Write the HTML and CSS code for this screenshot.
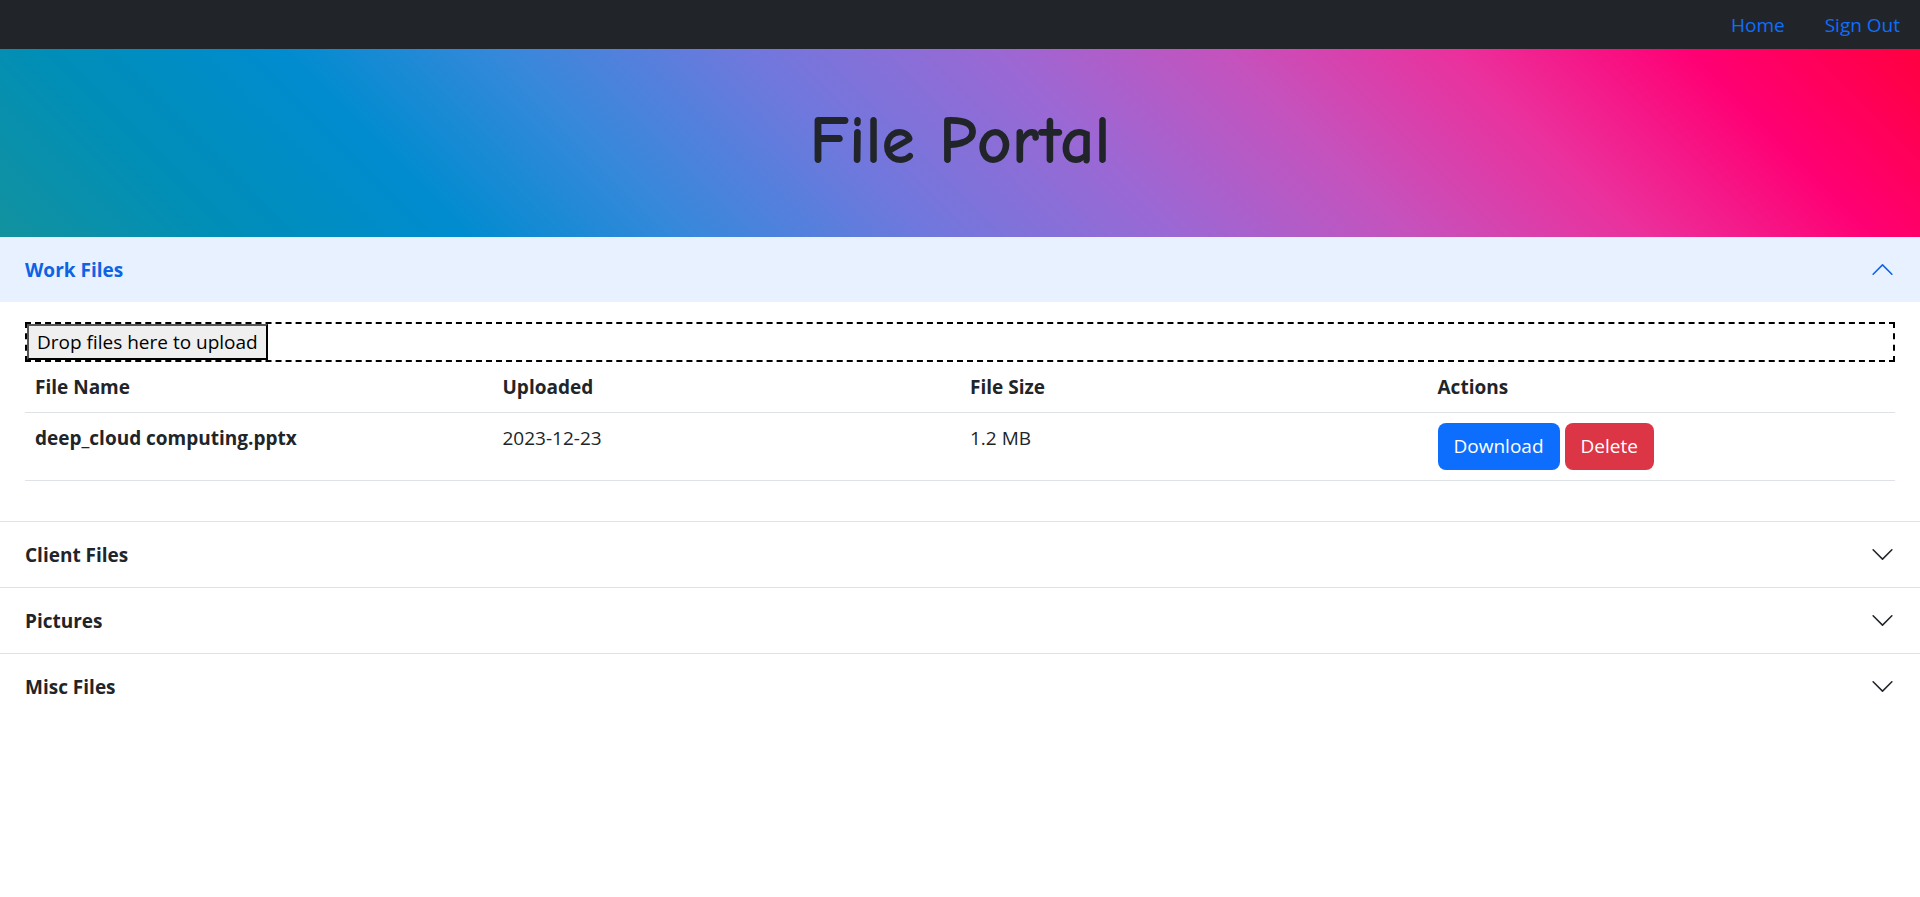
FILE: index.html
```html
<!DOCTYPE html>
<html lang="en">
<head>
<meta charset="utf-8">
<title>File Portal</title>
<link rel="stylesheet" href="styles.css">
</head>
<body>
<nav class="navbar">
  <a class="nav-link" href="#home">Home</a>
  <a class="nav-link" href="#signout">Sign Out</a>
</nav>
<header class="banner">
  <h1 class="banner-title">File Portal</h1>
</header>
<main class="accordion">
  <section class="item">
    <h2 class="item-heading">
      <button class="toggle toggle-open" type="button" aria-expanded="true" aria-controls="work-files">Work Files
        <svg class="chevron" viewBox="0 0 16 16" aria-hidden="true"><path fill-rule="evenodd" d="M1.646 4.646a.5.5 0 0 1 .708 0L8 10.293l5.646-5.647a.5.5 0 0 1 .708.708l-6 6a.5.5 0 0 1-.708 0l-6-6a.5.5 0 0 1 0-.708z"/></svg>
      </button>
    </h2>
    <div class="item-body" id="work-files">
      <div class="dropzone">
        <button class="drop-button" type="button">Drop files here to upload</button>
      </div>
      <table class="files">
        <thead>
          <tr><th scope="col">File Name</th><th scope="col">Uploaded</th><th scope="col">File Size</th><th scope="col">Actions</th></tr>
        </thead>
        <tbody>
          <tr>
            <th scope="row">deep_cloud computing.pptx</th>
            <td>2023-12-23</td>
            <td>1.2 MB</td>
            <td>
              <div class="actions">
                <button class="btn btn-primary" type="button">Download</button>
                <button class="btn btn-danger" type="button">Delete</button>
              </div>
            </td>
          </tr>
        </tbody>
      </table>
    </div>
  </section>
  <section class="item">
    <h2 class="item-heading">
      <button class="toggle" type="button" aria-expanded="false">Client Files
        <svg class="chevron" viewBox="0 0 16 16" aria-hidden="true"><path fill-rule="evenodd" d="M1.646 4.646a.5.5 0 0 1 .708 0L8 10.293l5.646-5.647a.5.5 0 0 1 .708.708l-6 6a.5.5 0 0 1-.708 0l-6-6a.5.5 0 0 1 0-.708z"/></svg>
      </button>
    </h2>
  </section>
  <section class="item">
    <h2 class="item-heading">
      <button class="toggle" type="button" aria-expanded="false">Pictures
        <svg class="chevron" viewBox="0 0 16 16" aria-hidden="true"><path fill-rule="evenodd" d="M1.646 4.646a.5.5 0 0 1 .708 0L8 10.293l5.646-5.647a.5.5 0 0 1 .708.708l-6 6a.5.5 0 0 1-.708 0l-6-6a.5.5 0 0 1 0-.708z"/></svg>
      </button>
    </h2>
  </section>
  <section class="item">
    <h2 class="item-heading">
      <button class="toggle" type="button" aria-expanded="false">Misc Files
        <svg class="chevron" viewBox="0 0 16 16" aria-hidden="true"><path fill-rule="evenodd" d="M1.646 4.646a.5.5 0 0 1 .708 0L8 10.293l5.646-5.647a.5.5 0 0 1 .708.708l-6 6a.5.5 0 0 1-.708 0l-6-6a.5.5 0 0 1 0-.708z"/></svg>
      </button>
    </h2>
  </section>
</main>
</body>
</html>
```
FILE: styles.css
```css
*, *::before, *::after { box-sizing: border-box; }

body {
  margin: 0;
  background: #fff;
  color: #212529;
  font-family: "Segoe UI", "Open Sans", "Noto Sans", sans-serif;
  font-size: 19px;
  line-height: 30px;
}

button { font: inherit; cursor: pointer; }

.navbar {
  display: flex;
  justify-content: flex-end;
  gap: 40px;
  padding: 10px 20px 9px;
  background: #212529;
}

.nav-link { color: #0d6efd; text-decoration: none; }

.banner {
  padding: 48px 20px 52px;
  text-align: center;
  background: linear-gradient(45deg, #12929f 0%, #008eb8 11%, #008ccf 22%, #3888db 33%, #6f78dd 44%, #9b68d4 56%, #c552bd 67%, #eb309c 78%, #ff0074 89%, #ff0040 100%);
}

.banner-title {
  margin: 0;
  font-family: "Comic Sans MS", "Comic Neue", "Open Sans", sans-serif;
  font-size: 68px;
  font-weight: 700;
  line-height: 88px;
}

.item + .item { border-top: 1px solid #dee2e6; }

.item-heading { margin: 0; font-size: 19px; }

.toggle {
  display: flex;
  align-items: center;
  justify-content: space-between;
  width: 100%;
  min-height: 65px;
  padding: 16px 25px;
  border: 0;
  background: #fff;
  color: #212529;
  font-weight: 700;
  text-align: left;
}

.toggle-open { background: #e7f1ff; color: #0c63e4; }

.chevron { width: 25px; height: 25px; fill: currentColor; }

.toggle-open .chevron { transform: rotate(180deg); }

.item-body { padding: 20px 25px; }

.dropzone { display: flex; border: 2px dashed #000; }

.drop-button {
  padding: 1px 8px;
  border: 2px outset #000;
  background: #efefef;
  color: #000;
}

.files {
  width: 100%;
  margin-bottom: 20px;
  border-collapse: collapse;
  table-layout: fixed;
}

.files th, .files td {
  padding: 10px;
  border-bottom: 1px solid #dee2e6;
  text-align: left;
  vertical-align: top;
}

.files th { font-weight: 700; }

.actions { display: flex; gap: 5px; }

.btn {
  padding: 8px 16px;
  border: 0;
  border-radius: 8px;
  color: #fff;
  line-height: 31px;
}

.btn-primary { background: #0d6efd; }

.btn-danger { background: #dc3545; }
```
